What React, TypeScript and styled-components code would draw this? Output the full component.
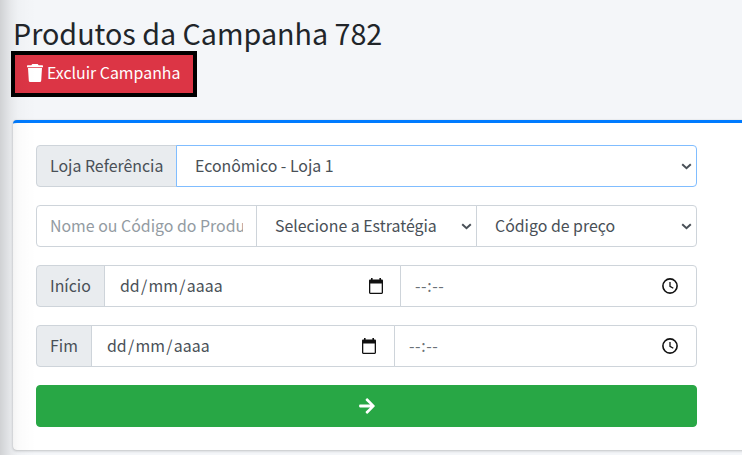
import React from "react";
import styled, { createGlobalStyle, css } from "styled-components";
import { FaArrowRight } from "react-icons/fa";

const GlobalStyle = createGlobalStyle`
  * { box-sizing: border-box; }
  body {
    margin: 0;
    overflow: hidden;
    background: #f4f6f9;
    color: #495057;
    font-family: "Noto Sans CJK JP", "Noto Sans", sans-serif;
    font-size: 15.9px;
  }
`;

const Page = styled.main`
  position: relative;
  width: 742px;
  height: 455px;
  padding: 15px 0 0 11px;
  overflow: hidden;
`;

const SidebarShadow = styled.div`
  position: absolute;
  inset: 0 auto 0 0;
  width: 36px;
  pointer-events: none;
  background: linear-gradient(
    to right,
    rgba(0, 0, 0, 0.15),
    rgba(0, 0, 0, 0.105) 5px,
    rgba(0, 0, 0, 0.055) 11px,
    rgba(0, 0, 0, 0.02) 18px,
    rgba(0, 0, 0, 0.007) 27px,
    transparent
  );
`;

const Title = styled.h1`
  margin: 0 0 0 2px;
  height: 36px;
  color: #212529;
  font-size: 28.7px;
  font-weight: 400;
  line-height: 36px;
  white-space: nowrap;
`;

const DeleteButton = styled.button`
  display: flex;
  align-items: center;
  gap: 4px;
  width: 186px;
  height: 46px;
  padding: 0 0 3px 12px;
  border: 4px solid #000;
  background: #dc3545;
  color: #fff;
  font: inherit;
  line-height: 24px;
  white-space: nowrap;
`;

const Card = styled.section`
  width: 760px;
  height: 330px;
  margin: 23px 0 0 2px;
  padding: 22px 0 0 23px;
  border-top: 3px solid #007bff;
  border-radius: 4px;
  background: #fff;
  box-shadow: 0 0 1px rgba(0, 0, 0, 0.13), 0 1px 3px rgba(0, 0, 0, 0.2);
`;

const Form = styled.form`
  display: grid;
  grid-template-rows: repeat(5, 42px);
  row-gap: 18px;
  width: 661px;
`;

const Group = styled.div`
  display: flex;
  min-width: 0;
`;

const cell = css`
  display: flex;
  align-items: center;
  height: 42px;
  border: 1px solid #ced4da;
  line-height: 24px;
  white-space: nowrap;

  &:not(:first-child) { margin-left: -1px; }
  &:first-child { border-radius: 4px 0 0 4px; }
  &:last-child { border-radius: 0 4px 4px 0; }
`;

const Label = styled.span<{ $width: number }>`
  ${cell}
  flex: 0 0 ${(p) => p.$width}px;
  padding: 0 0 1px 13px;
  background: #e9ecef;
`;

const Field = styled.div<{ $width?: number; $inset?: number; $end?: number; $active?: boolean }>`
  ${cell}
  flex: ${(p) => (p.$width ? `0 0 ${p.$width}px` : "1 1 0")};
  justify-content: space-between;
  min-width: 0;
  padding: 0 ${(p) => p.$end ?? 4}px 0 ${(p) => p.$inset ?? 18}px;
  background: #fff;
  ${(p) => p.$active && "border-color: #80bdff;"}

  svg { flex: none; }
`;

const Placeholder = styled.span`
  flex: 1;
  overflow: hidden;
  color: #939ba2;
`;

const DateText = styled.span`
  padding-bottom: 1px;
`;

const Slash = styled.span`
  margin: 0 1.3px;
`;

const TimeText = styled.span`
  color: #6b7177;
  letter-spacing: 0.6px;
`;

const SubmitButton = styled.button`
  display: flex;
  align-items: center;
  justify-content: center;
  height: 42px;
  padding: 0 0 1px;
  border: 1px solid #28a745;
  border-radius: 4px;
  background: #28a745;
  color: #fff;
`;

const TrashIcon = () => (
  <svg width="16" height="18" viewBox="0 0 16 18" fill="#fff">
    <path d="M5.300 0h5.400l1 1.300h3.700c.4 0 .6.3.6.600v1.300H0V1.900c0-.3.2-.6.600-.6h3.700z" />
    <path d="M1 4.100h14l-.8 12.300c-.1.900-.7 1.600-1.700 1.600h-9c-1 0-1.600-.7-1.700-1.600z" />
  </svg>
);

const Chevron = () => (
  <svg width="11" height="7" viewBox="0 0 11 7" fill="none" stroke="#495057" strokeWidth="2">
    <path d="M1.200 1.300 5.500 5.200l4.300-3.900" />
  </svg>
);

const CalendarIcon = () => (
  <svg width="16" height="17" viewBox="0 0 16 17" fill="#111">
    <path d="M3 0h1.600v1.500h6.800V0H13v1.500h.7c.8 0 1.300.5 1.300 1.300v11.800c0 .8-.5 1.400-1.300 1.400H2.300C1.500 16 1 15.400 1 14.600V2.800c0-.8.5-1.300 1.300-1.300H3zM2.300 5.500v9.200h11.400V5.500z" />
  </svg>
);

const ClockIcon = () => (
  <svg width="16" height="16" viewBox="0 0 16 16" fill="none" stroke="#111">
    <circle cx="8" cy="8" r="7.100" strokeWidth="1.600" />
    <path d="M8 4v4.300l3.300 2" strokeWidth="1.300" />
  </svg>
);

type PeriodProps = { label: string; labelWidth: number; dateWidth: number; dateEnd: number };

const PeriodRow = ({ label, labelWidth, dateWidth, dateEnd }: PeriodProps) => (
  <Group>
    <Label $width={labelWidth}>{label}</Label>
    <Field $width={dateWidth} $inset={15} $end={dateEnd}>
      <DateText>
        dd<Slash>/</Slash>mm<Slash>/</Slash>aaaa
      </DateText>
      <CalendarIcon />
    </Field>
    <Field $inset={14} $end={18}>
      <TimeText>--:--</TimeText>
      <ClockIcon />
    </Field>
  </Group>
);

export default function App() {
  return (
    <>
      <GlobalStyle />
      <Page>
        <Title>Produtos da Campanha 782</Title>
        <DeleteButton type="button">
          <TrashIcon />
          Excluir Campanha
        </DeleteButton>
        <Card>
          <Form>
            <Group>
              <Label $width={141}>Loja Referência</Label>
              <Field $active>
                Econômico - Loja 1
                <Chevron />
              </Field>
            </Group>
            <Group>
              <Field $width={221} $inset={13} $end={13}>
                <Placeholder>Nome ou Código do Produto</Placeholder>
              </Field>
              <Field $width={221}>
                Selecione a Estratégia
                <Chevron />
              </Field>
              <Field>
                Código de preço
                <Chevron />
              </Field>
            </Group>
            <PeriodRow label="Início" labelWidth={69} dateWidth={297} dateEnd={16} />
            <PeriodRow label="Fim" labelWidth={56} dateWidth={304} dateEnd={17} />
            <SubmitButton type="button" aria-label="Avançar">
              <FaArrowRight size={18} />
            </SubmitButton>
          </Form>
        </Card>
        <SidebarShadow />
      </Page>
    </>
  );
}
